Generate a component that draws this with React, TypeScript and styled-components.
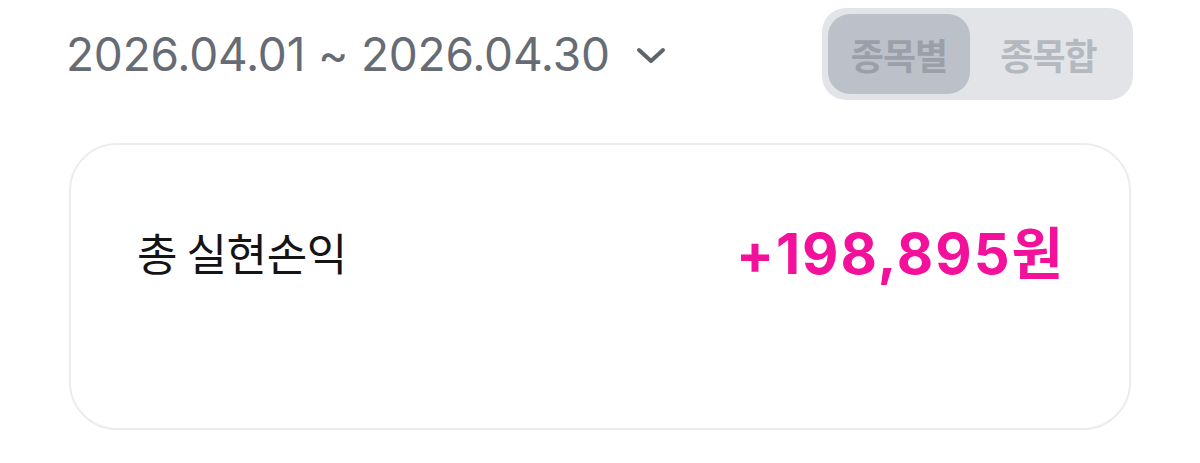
import React from "react";
import styled, { createGlobalStyle } from "styled-components";

const Global = createGlobalStyle`
  html, body { margin: 0; padding: 0; background: #ffffff; }
  body { font-family: Inter, "Noto Sans CJK KR", sans-serif; -webkit-font-smoothing: antialiased; }
`;

const Page = styled.div`
  width: 1200px;
  height: 463px;
  box-sizing: border-box;
  padding: 8px 67px 0 66px;
  display: flex;
  flex-direction: column;
`;

const Header = styled.div`
  display: flex;
  align-items: center;
  justify-content: space-between;
  height: 92px;
`;

const DateButton = styled.button`
  display: flex;
  align-items: center;
  gap: 26px;
  border: none;
  background: none;
  padding: 0;
  cursor: pointer;
  font-family: Inter, "Noto Sans CJK KR", sans-serif;
  font-size: 46px;
  font-weight: 400;
  color: #676c74;
  letter-spacing: -0.2px;
`;

const Chevron = styled.svg`
  width: 30px;
  height: 18px;
  margin-top: 4px;
`;

const Segmented = styled.div`
  display: flex;
  align-items: stretch;
  box-sizing: border-box;
  width: 311px;
  height: 92px;
  padding: 6px;
  border-radius: 24px;
  background: #e3e4e8;
`;

const Segment = styled.div<{ $active?: boolean }>`
  flex: 0 0 142px;
  display: flex;
  align-items: center;
  justify-content: center;
  border-radius: 22px;
  background: ${(p) => (p.$active ? "#bcc1c9" : "transparent")};
  color: ${(p) => (p.$active ? "#9aa0a9" : "#b4b8bf")};
  font-family: "Noto Sans CJK KR", sans-serif;
  font-size: 36px;
  font-weight: 700;
  letter-spacing: -1px;
  & + & {
    flex: 1;
  }
`;

const Card = styled.div`
  margin: 43px 2px 0 3px;
  height: 287px;
  box-sizing: border-box;
  border: 2px solid #ececec;
  border-radius: 48px;
  padding: 77px 66px 0 66px;
  display: flex;
  flex-direction: column;
`;

const Row = styled.div`
  display: flex;
  align-items: center;
  justify-content: space-between;
`;

const Label = styled.div`
  font-family: "Noto Sans CJK KR", sans-serif;
  font-size: 44px;
  line-height: 1;
  font-weight: 400;
  color: #141414;
  letter-spacing: -0.4px;
`;

const Amount = styled.div`
  font-family: Inter, "Noto Sans CJK KR", sans-serif;
  font-size: 56px;
  line-height: 1;
  font-weight: 700;
  color: #f3109a;
  letter-spacing: 2px;
`;

const Won = styled.span`
  font-family: "Noto Sans CJK KR", sans-serif;
  font-weight: 700;
  letter-spacing: 0;
`;

export default function App() {
  return (
    <>
      <Global />
      <Page>
        <Header>
          <DateButton>
            <span>2026.04.01 ~ 2026.04.30</span>
            <Chevron viewBox="0 0 30 18" fill="none">
              <path
                d="M3 3 L15 14 L27 3"
                stroke="#5f636a"
                strokeWidth="4"
                strokeLinecap="round"
                strokeLinejoin="round"
              />
            </Chevron>
          </DateButton>
          <Segmented>
            <Segment $active>종목별</Segment>
            <Segment>종목합</Segment>
          </Segmented>
        </Header>
        <Card>
          <Row>
            <Label>총 실현손익</Label>
            <Amount>
              +198,895<Won>원</Won>
            </Amount>
          </Row>
        </Card>
      </Page>
    </>
  );
}
